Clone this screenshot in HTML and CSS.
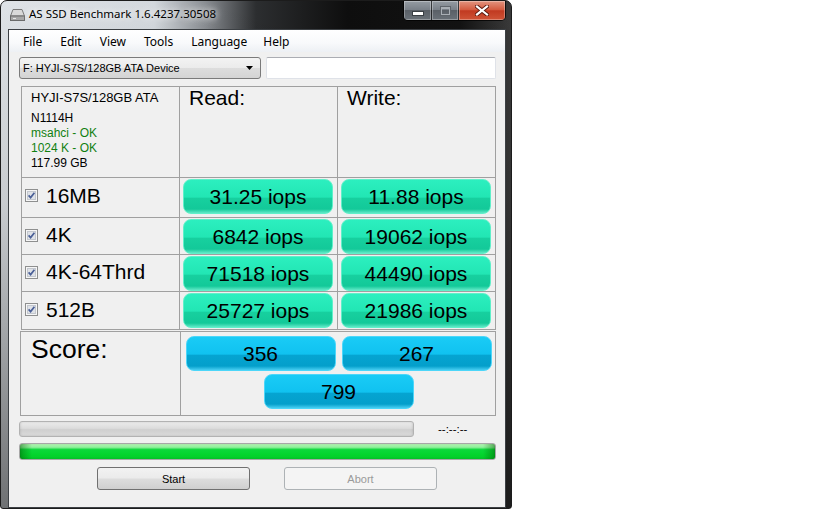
FILE: index.html
```html
<!DOCTYPE html>
<html lang="en">
<head>
  <meta charset="UTF-8">
  <title>AS SSD Benchmark</title>
  <link rel="stylesheet" href="styles.css">
</head>
<body>
  <div class="window">
    <div class="titlebar">
      <svg class="app-icon" width="15" height="13" viewBox="0 0 15 13">
        <path d="M3 1.5 H12 L14.5 8 H0.5 Z" fill="#d9d9d9" stroke="#7a7a7a"/>
        <rect x="0.5" y="8" width="14" height="4.5" fill="#a7a7a7" stroke="#6a6a6a"/>
        <path d="M3 10.5 H6" stroke="#e6e6e6"/>
      </svg>
      <span class="title">AS SSD Benchmark 1.6.4237.30508</span>
      <div class="caption-buttons">
        <span class="cap cap-min"><span class="glyph-min"></span></span>
        <span class="cap cap-max"><span class="glyph-max"></span></span>
        <span class="cap cap-close">
          <svg width="14" height="11" viewBox="0 0 14 11">
            <path d="M2 1.5 L12 9.5 M12 1.5 L2 9.5" stroke="#5a1a10" stroke-width="4" stroke-linecap="square"/>
            <path d="M2 1.5 L12 9.5 M12 1.5 L2 9.5" stroke="#ffffff" stroke-width="2.2" stroke-linecap="square"/>
          </svg>
        </span>
      </div>
    </div>

    <div class="client">
      <ul class="menubar">
        <li>File</li>
        <li>Edit</li>
        <li>View</li>
        <li>Tools</li>
        <li>Language</li>
        <li>Help</li>
      </ul>

      <div class="content">
        <div class="drive-row">
          <div class="combo">
            <span>F: HYJI-S7S/128GB ATA Device</span>
            <svg class="combo-arrow" width="7" height="4" viewBox="0 0 7 4"><path d="M0 0 H7 L3.5 4 Z" fill="#000"/></svg>
          </div>
          <div class="textbox"></div>
        </div>

        <div class="results">
          <div class="cell info">
            <div class="model">HYJI-S7S/128GB ATA</div>
            <div>N1114H</div>
            <div class="ok">msahci - OK</div>
            <div class="ok">1024 K - OK</div>
            <div>117.99 GB</div>
          </div>
          <div class="cell head">Read:</div>
          <div class="cell head">Write:</div>

          <div class="cell label first">
            <svg class="check" width="13" height="13" viewBox="0 0 13 13"><rect x="0.5" y="0.5" width="12" height="12" fill="#f6f6f6" stroke="#8e8f8f"/><rect x="2.5" y="2.5" width="8" height="8" fill="#dfe2e7" stroke="#c3c7ce"/><path d="M3.6 6.4 L5.6 8.6 L9.4 3.8" fill="none" stroke="#4a5f97" stroke-width="1.7"/></svg>
            16MB
          </div>
          <div class="cell"><div class="bar green">31.25 iops</div></div>
          <div class="cell"><div class="bar green">11.88 iops</div></div>

          <div class="cell label">
            <svg class="check" width="13" height="13" viewBox="0 0 13 13"><rect x="0.5" y="0.5" width="12" height="12" fill="#f6f6f6" stroke="#8e8f8f"/><rect x="2.5" y="2.5" width="8" height="8" fill="#dfe2e7" stroke="#c3c7ce"/><path d="M3.6 6.4 L5.6 8.6 L9.4 3.8" fill="none" stroke="#4a5f97" stroke-width="1.7"/></svg>
            4K
          </div>
          <div class="cell"><div class="bar green">6842 iops</div></div>
          <div class="cell"><div class="bar green">19062 iops</div></div>

          <div class="cell label">
            <svg class="check" width="13" height="13" viewBox="0 0 13 13"><rect x="0.5" y="0.5" width="12" height="12" fill="#f6f6f6" stroke="#8e8f8f"/><rect x="2.5" y="2.5" width="8" height="8" fill="#dfe2e7" stroke="#c3c7ce"/><path d="M3.6 6.4 L5.6 8.6 L9.4 3.8" fill="none" stroke="#4a5f97" stroke-width="1.7"/></svg>
            4K-64Thrd
          </div>
          <div class="cell"><div class="bar green">71518 iops</div></div>
          <div class="cell"><div class="bar green">44490 iops</div></div>

          <div class="cell label">
            <svg class="check" width="13" height="13" viewBox="0 0 13 13"><rect x="0.5" y="0.5" width="12" height="12" fill="#f6f6f6" stroke="#8e8f8f"/><rect x="2.5" y="2.5" width="8" height="8" fill="#dfe2e7" stroke="#c3c7ce"/><path d="M3.6 6.4 L5.6 8.6 L9.4 3.8" fill="none" stroke="#4a5f97" stroke-width="1.7"/></svg>
            512B
          </div>
          <div class="cell"><div class="bar green">25727 iops</div></div>
          <div class="cell"><div class="bar green">21986 iops</div></div>
        </div>

        <div class="score">
          <div class="cell score-label">Score:</div>
          <div class="cell score-bars">
            <div class="bar blue">356</div>
            <div class="bar blue">267</div>
            <div class="bar blue">799</div>
          </div>
        </div>

        <div class="progress-row">
          <div class="progress"></div>
          <span class="eta">--:--:--</span>
        </div>
        <div class="progress full"></div>

        <div class="buttons">
          <button>Start</button>
          <button disabled>Abort</button>
        </div>
      </div>
    </div>
  </div>
</body>
</html>
```

FILE: styles.css
```css
body {
  margin: 0;
  background: #fff;
  font-family: "Liberation Sans", Arial, sans-serif;
}

/* window frame (Aero glass look) */
.window {
  width: 512px;
  height: 509px;
  box-sizing: border-box;
  display: flex;
  flex-direction: column;
  border: 1px solid #1c1c1c;
  border-radius: 7px 7px 3px 3px;
  background:
    linear-gradient(to bottom, rgba(0,0,0,0) 0, rgba(0,0,0,0.1) 40%, rgba(0,0,0,0.5) 100%),
    linear-gradient(to right, #dfe3e7 0%, #d3d8dd 30%, #8a8e93 40%, #2c2e30 50%, #0e0e0e 68%, #121212 90%, #3a3a3a 100%);
}
.titlebar {
  height: 28px;
  display: flex;
  align-items: flex-start;
  padding-left: 9px;
}
.app-icon {
  margin-top: 7px;
}
.title {
  margin: 5px 0 0 4px;
  font-family: "Noto Sans", sans-serif;
  font-size: 11.5px;
  line-height: 16px;
  color: #000;
  text-shadow: 0 0 6px #fff, 0 0 10px rgba(255,255,255,0.8);
}
.caption-buttons {
  margin-left: auto;
  margin-right: 5px;
  display: flex;
  height: 19px;
  border: 1px solid rgba(0,0,0,0.75);
  border-top: none;
  border-radius: 0 0 5px 5px;
  overflow: hidden;
}
.cap {
  display: flex;
  align-items: center;
  justify-content: center;
  box-shadow: inset 0 0 0 1px rgba(255,255,255,0.3);
}
.cap-min, .cap-max {
  width: 27px;
  background: linear-gradient(#959ca3, #7a8189 45%, #5a6067 50%, #6a7178);
  border-right: 1px solid rgba(0,0,0,0.6);
}
.cap-max {
  width: 26px;
}
.glyph-min {
  width: 10px;
  height: 3px;
  margin-top: 5px;
  background: #fff;
  border: 1px solid #3a3f44;
}
.glyph-max {
  width: 7px;
  height: 5px;
  border: 1px solid #a9afb5;
  border-top-width: 2px;
  outline: 1px solid #5f656b;
}
.cap-close {
  width: 46px;
  background: linear-gradient(#e29580 0%, #d45c41 45%, #c13a21 52%, #cf5437 100%);
}

/* client area */
.client {
  flex: 1;
  margin: 0 5px 0 7px;
  border: 1px solid #3c4044;
  background: #f0f0f0;
  display: flex;
  flex-direction: column;
}
.menubar {
  list-style: none;
  margin: 0;
  padding: 0 0 0 5px;
  height: 22px;
  display: flex;
  background: linear-gradient(#ffffff 0%, #f8f9fb 60%, #edf0f4 100%);
  font-family: "Noto Sans", sans-serif;
  font-size: 12px;
  line-height: 23px;
}
.menubar li {
  padding: 0 9px;
}
.menubar li:nth-child(5) {
  padding-right: 7px;
}
.content {
  padding: 0 9px 0 10px;
}
.drive-row {
  display: flex;
  gap: 5px;
  margin-top: 5px;
}
.combo {
  width: 242px;
  height: 22px;
  box-sizing: border-box;
  display: flex;
  align-items: center;
  padding: 0 7px 0 3px;
  border: 1px solid #7a7a7a;
  border-radius: 3px;
  background: linear-gradient(#f3f3f3, #ebebeb 50%, #dddddd 51%, #d4d4d4);
  font-size: 11px;
}
.combo-arrow {
  margin-left: auto;
}
.textbox {
  width: 230px;
  height: 22px;
  box-sizing: border-box;
  background: #fff;
  border: 1px solid #dfe2e8;
  border-top-color: #abadb3;
  border-radius: 2px;
}

/* results table */
.results {
  margin: 7px 0 0 2px;
  display: grid;
  grid-template-columns: 158px 158px 158px;
  grid-template-rows: 91px 40px 37px 37px 38px;
  border-left: 1px solid #a0a0a0;
  border-top: 1px solid #a0a0a0;
  width: 475px;
  box-sizing: border-box;
}
.cell {
  box-sizing: border-box;
  border-right: 1px solid #a0a0a0;
  border-bottom: 1px solid #a0a0a0;
  padding: 1px 0 0 3px;
}
.info {
  padding: 3px 0 0 9px;
  font-size: 12px;
  line-height: 15px;
  color: #000;
}
.info .model {
  font-size: 13px;
  line-height: 16px;
  margin-bottom: 5px;
}
.info .ok {
  color: #108010;
}
.head {
  padding: 0 0 0 9px;
  font-size: 21px;
  line-height: 22px;
}
.label {
  display: flex;
  align-items: center;
  gap: 8px;
  padding: 0 0 2px 3px;
  font-size: 21px;
}
.label.first {
  padding-bottom: 4px;
}

.bar {
  width: 150px;
  height: 35px;
  box-sizing: border-box;
  border-radius: 8px;
  text-align: center;
  font-size: 21px;
  line-height: 33px;
  color: #000;
}
.green {
  border: 1px solid #5ff0c9;
  background: linear-gradient(#2cefbf 0%, #22e6b4 52%, #17d09f 55%, #13c999 88%, #5fe8c6 100%);
}
.blue {
  border: 1px solid #4cd6f9;
  background: linear-gradient(#1acbf6 0%, #10c2f0 52%, #05a4d1 55%, #049fcb 88%, #46cdf1 100%);
}

.score {
  margin: 1px 0 0 1px;
  display: grid;
  grid-template-columns: 160px 315px;
  height: 85px;
  border-left: 1px solid #a0a0a0;
  border-top: 1px solid #a0a0a0;
  width: 476px;
  box-sizing: border-box;
}
.score-label {
  padding: 2px 0 0 10px;
  font-size: 26.5px;
  line-height: 30px;
}
.score-bars {
  display: flex;
  flex-wrap: wrap;
  justify-content: center;
  align-content: flex-start;
  gap: 3px 6px;
  padding: 4px 0 0 1px;
}

/* progress */
.progress-row {
  display: flex;
  align-items: center;
  margin-top: 5px;
}
.progress {
  width: 395px;
  height: 16px;
  box-sizing: border-box;
  border: 1px solid #b2b2b2;
  border-radius: 3px;
  background: linear-gradient(#ececec, #dcdcdc 45%, #cfcfcf 55%, #dadada);
  box-shadow: inset 1px 0 2px rgba(0,0,0,0.08), inset -1px 0 2px rgba(0,0,0,0.08);
}
.eta {
  margin-left: 24px;
  font-size: 11.5px;
  color: #000;
}
.progress.full {
  width: 477px;
  height: 17px;
  margin-top: 6px;
  border-color: #a7a7a7;
  background:
    linear-gradient(to right, rgba(0,90,0,0.45) 0, rgba(0,90,0,0) 12px, rgba(0,90,0,0) calc(100% - 12px), rgba(0,90,0,0.45) 100%),
    linear-gradient(#b6f5b6 0%, #8ef09a 22%, #0bd83a 38%, #02d42c 75%, #06c92a 100%);
}

.buttons {
  display: flex;
  gap: 34px;
  margin: 7px 0 0 78px;
}
button {
  width: 153px;
  height: 23px;
  border: 1px solid #707070;
  border-radius: 3px;
  background: linear-gradient(#f2f2f2, #ebebeb 48%, #dddddd 52%, #cfcfcf);
  font-family: "Liberation Sans", Arial, sans-serif;
  font-size: 11px;
  color: #000;
  padding: 0;
}
button:disabled {
  border-color: #adb2b5;
  background: #f4f4f4;
  color: #9a9a9a;
}
```
